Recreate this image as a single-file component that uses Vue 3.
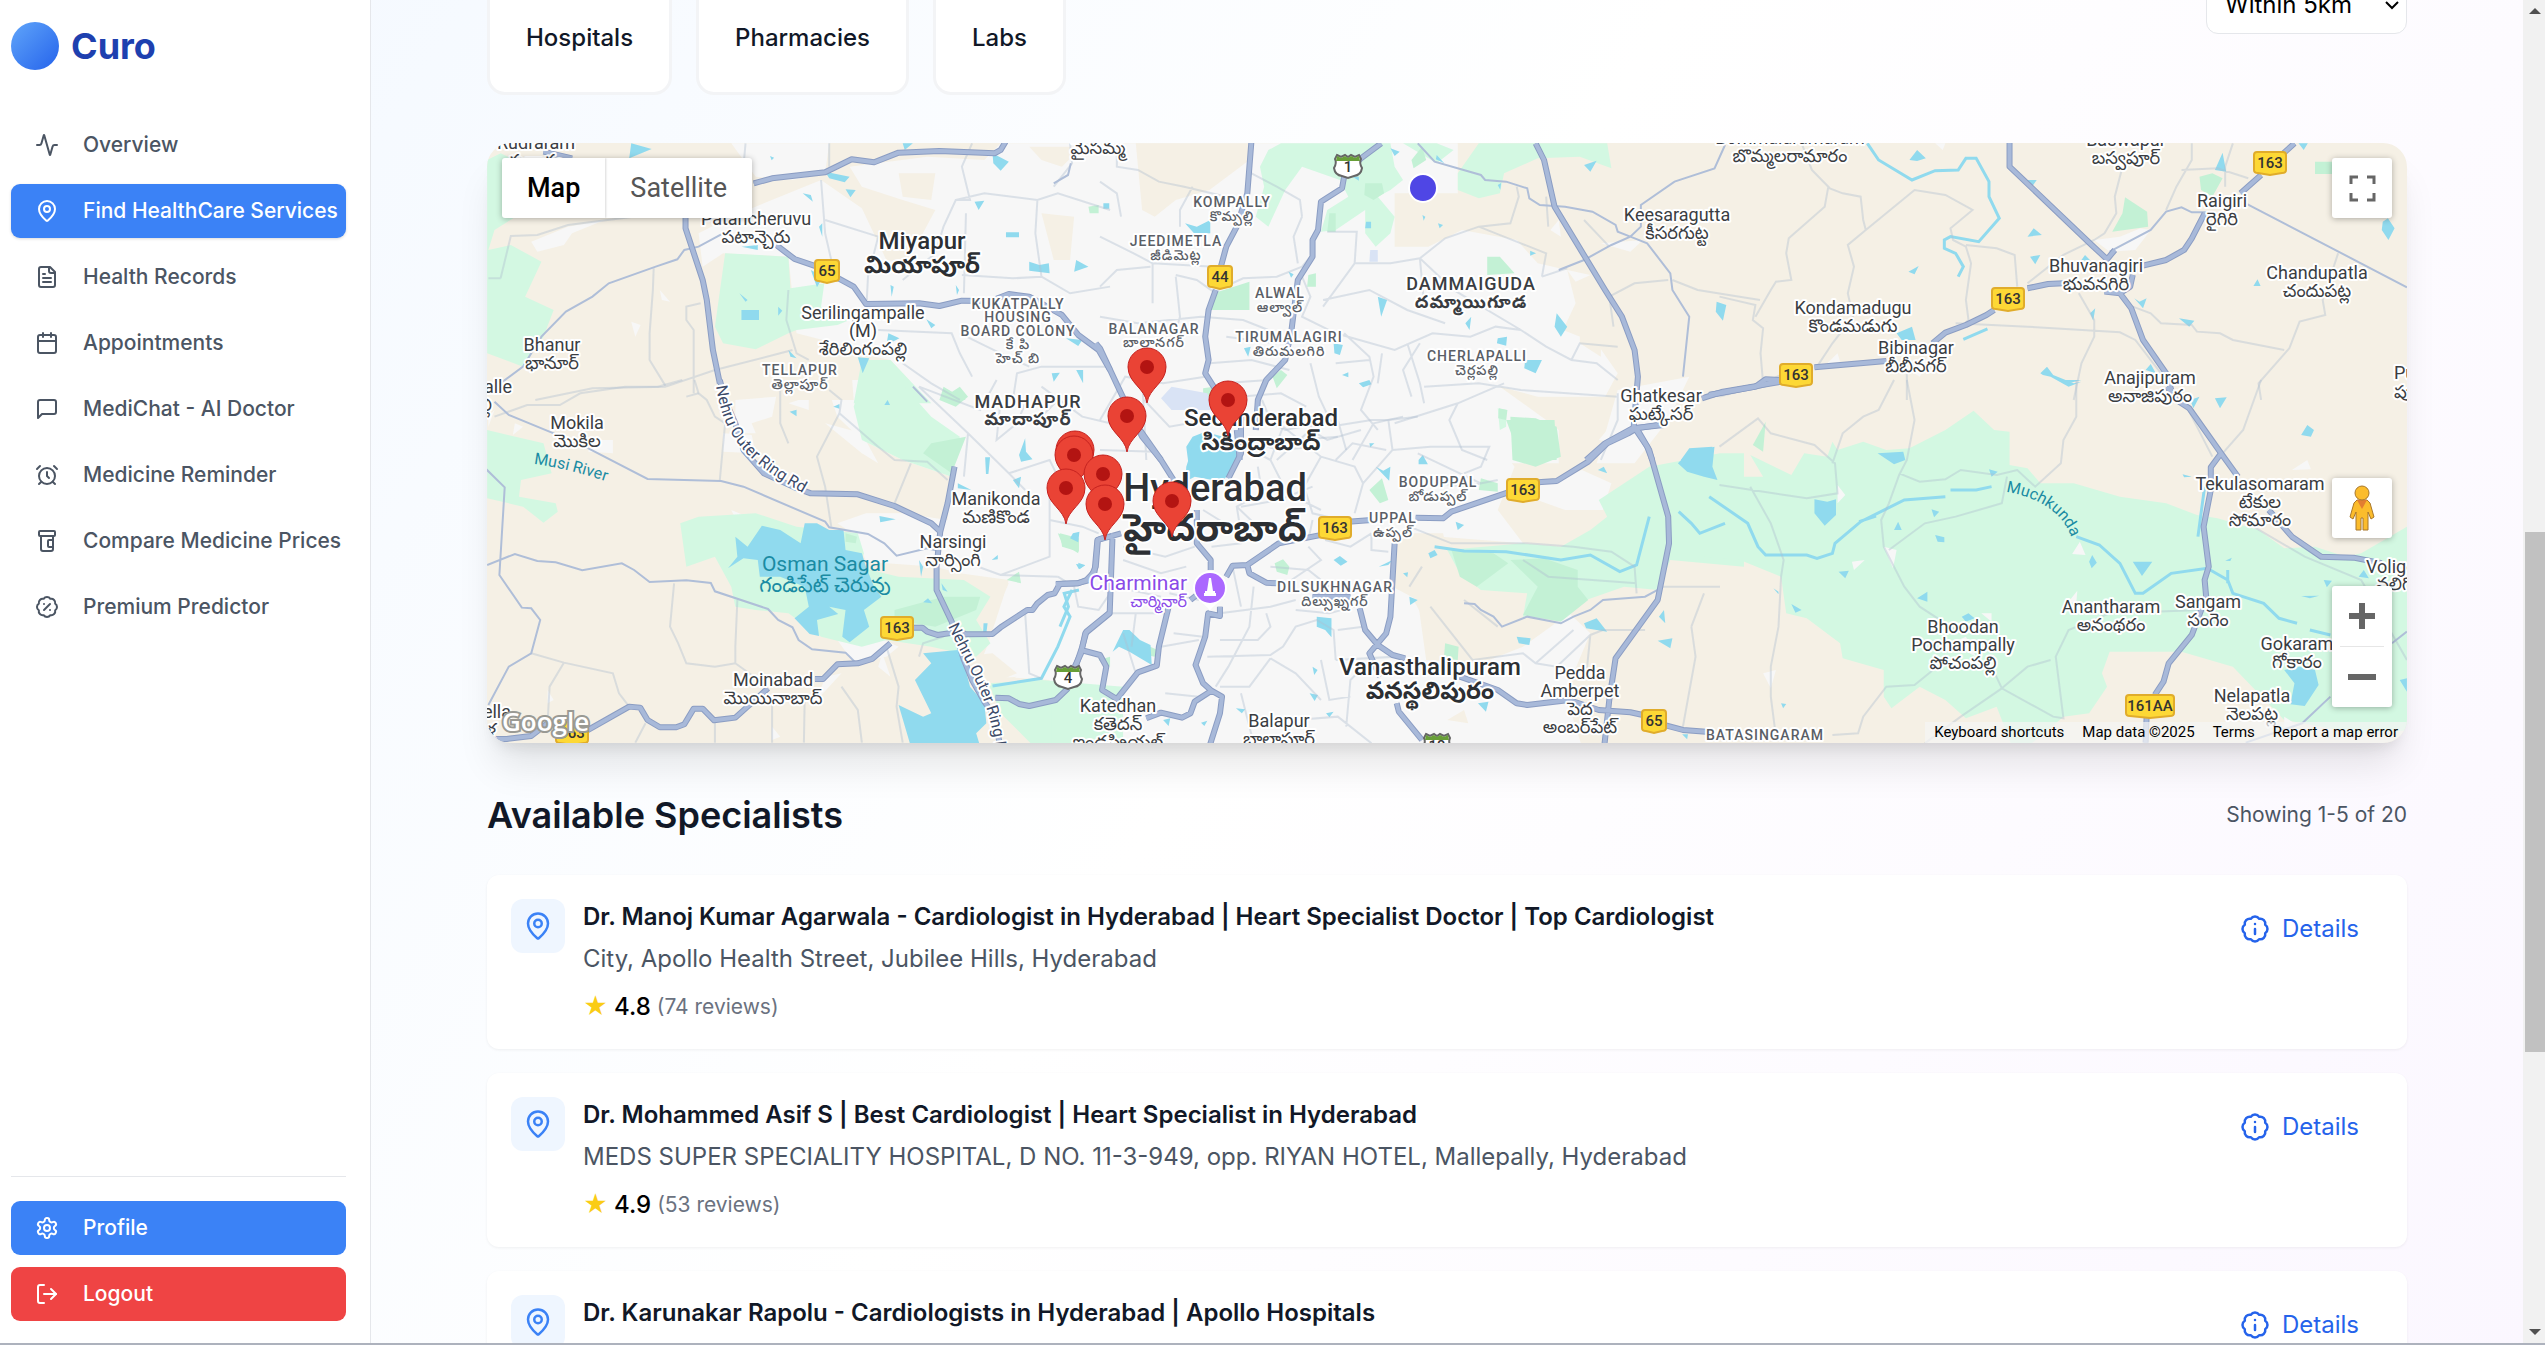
<script setup>
import { ref } from 'vue'

const icons = {
  activity: ['M22 12h-2.48a2 2 0 0 0-1.93 1.46l-2.35 8.36a.25.25 0 0 1-.48 0L9.24 2.18a.25.25 0 0 0-.48 0l-2.35 8.36A2 2 0 0 1 4.49 12H2'],
  pin: ['M20 10c0 4.993-5.539 10.193-7.399 11.799a1 1 0 0 1-1.202 0C9.539 20.193 4 14.993 4 10a8 8 0 0 1 16 0', 'M15 10a3 3 0 1 1-6 0a3 3 0 0 1 6 0'],
  file: ['M15 2H6a2 2 0 0 0-2 2v16a2 2 0 0 0 2 2h12a2 2 0 0 0 2-2V7Z', 'M14 2v4a2 2 0 0 0 2 2h4', 'M10 9H8', 'M16 13H8', 'M16 17H8'],
  calendar: ['M8 2v4', 'M16 2v4', 'M5 4h14a2 2 0 0 1 2 2v14a2 2 0 0 1-2 2H5a2 2 0 0 1-2-2V6a2 2 0 0 1 2-2', 'M3 10h18'],
  message: ['M21 15a2 2 0 0 1-2 2H7l-4 4V5a2 2 0 0 1 2-2h14a2 2 0 0 1 2 2z'],
  alarm: ['M20 13a8 8 0 1 1-16 0a8 8 0 0 1 16 0', 'M12 9v4l2 2', 'M5 3 2 6', 'm22 6-3-3', 'M6.38 18.7 4 21', 'M17.64 18.67 20 21'],
  bottle: ['M18 11h-4a1 1 0 0 0-1 1v5a1 1 0 0 0 1 1h4', 'M6 7v13a2 2 0 0 0 2 2h8a2 2 0 0 0 2-2V7', 'M5 2h14a1 1 0 0 1 1 1v3a1 1 0 0 1-1 1H5a1 1 0 0 1-1-1V3a1 1 0 0 1 1-1'],
  percent: ['M3.85 8.62a4 4 0 0 1 4.78-4.77 4 4 0 0 1 6.74 0 4 4 0 0 1 4.78 4.78 4 4 0 0 1 0 6.74 4 4 0 0 1-4.77 4.78 4 4 0 0 1-6.75 0 4 4 0 0 1-4.78-4.77 4 4 0 0 1 0-6.76Z', 'm15 9-6 6', 'M9 9h.01', 'M15 15h.01'],
  info: ['M3.85 8.62a4 4 0 0 1 4.78-4.77 4 4 0 0 1 6.74 0 4 4 0 0 1 4.78 4.78 4 4 0 0 1 0 6.74 4 4 0 0 1-4.77 4.78 4 4 0 0 1-6.75 0 4 4 0 0 1-4.78-4.77 4 4 0 0 1 0-6.76Z', 'M12 16v-4', 'M12 8h.01'],
  settings: ['M12.22 2h-.44a2 2 0 0 0-2 2v.18a2 2 0 0 1-1 1.73l-.43.25a2 2 0 0 1-2 0l-.15-.08a2 2 0 0 0-2.73.73l-.22.38a2 2 0 0 0 .73 2.73l.15.1a2 2 0 0 1 1 1.72v.51a2 2 0 0 1-1 1.74l-.15.09a2 2 0 0 0-.73 2.73l.22.38a2 2 0 0 0 2.73.73l.15-.08a2 2 0 0 1 2 0l.43.25a2 2 0 0 1 1 1.73V20a2 2 0 0 0 2 2h.44a2 2 0 0 0 2-2v-.18a2 2 0 0 1 1-1.73l.43-.25a2 2 0 0 1 2 0l.15.08a2 2 0 0 0 2.73-.73l.22-.39a2 2 0 0 0-.73-2.73l-.15-.08a2 2 0 0 1-1-1.74v-.5a2 2 0 0 1 1-1.74l.15-.09a2 2 0 0 0 .73-2.73l-.22-.38a2 2 0 0 0-2.73-.73l-.15.08a2 2 0 0 1-2 0l-.43-.25a2 2 0 0 1-1-1.73V4a2 2 0 0 0-2-2z', 'M15 12a3 3 0 1 1-6 0a3 3 0 0 1 6 0'],
  logout: ['M9 21H5a2 2 0 0 1-2-2V5a2 2 0 0 1 2-2h4', 'm16 17 5-5-5-5', 'M21 12H9'],
}

const nav = [
  { label: 'Overview', icon: 'activity' },
  { label: 'Find HealthCare Services', icon: 'pin', active: true },
  { label: 'Health Records', icon: 'file' },
  { label: 'Appointments', icon: 'calendar' },
  { label: 'MediChat - AI Doctor', icon: 'message' },
  { label: 'Medicine Reminder', icon: 'alarm' },
  { label: 'Compare Medicine Prices', icon: 'bottle' },
  { label: 'Premium Predictor', icon: 'percent' },
]

const categories = ['Hospitals', 'Pharmacies', 'Labs']
const radius = ref('5')

const specialists = [
  { name: 'Dr. Manoj Kumar Agarwala - Cardiologist in Hyderabad | Heart Specialist Doctor | Top Cardiologist', address: 'City, Apollo Health Street, Jubilee Hills, Hyderabad', rating: '4.8', reviews: 74 },
  { name: 'Dr. Mohammed Asif S | Best Cardiologist | Heart Specialist in Hyderabad', address: 'MEDS SUPER SPECIALITY HOSPITAL, D NO. 11-3-949, opp. RIYAN HOTEL, Mallepally, Hyderabad', rating: '4.9', reviews: 53 },
  { name: 'Dr. Karunakar Rapolu - Cardiologists in Hyderabad | Apollo Hospitals', address: 'Apollo Hospitals, Jubilee Hills, Hyderabad', rating: '4.9', reviews: 41 },
]

// Every tile keeps its shapes in its own coordinate space; `at` places it on the map.
const tiles = [
  {
    at: 'translate(470 0) scale(.4082 .3333)',
    urban: 'M640,430H880L870,520 790,540 700,530z M860,540L960,625 1020,780 1070,790 1140,630 1060,600 960,560 930,500 1120,470 1260,480 1300,430H1600V1210H1130L1030,1080 950,1060 870,1050 800,1000 780,770 620,760 570,800 560,700 640,650z M150,725L240,680 330,660 250,700 230,735 165,755z M465,870L490,905 470,900z M395,965L418,975 405,1010z M45,880L90,865 60,905z',
    beige: 'M1050,520L1140,520 1130,600 1060,590z M1400,640L1480,650 1470,780 1430,780z M1370,440H1500L1450,500 1400,480z M800,1000L930,1040 940,1200H780z',
    park: 'M42,480L75,460 110,480 125,640 60,690 45,750 100,735 175,785 135,890 205,930 180,1010 130,1100 42,1060z M625,760L780,770 785,865 868,850 860,920 930,960 900,975 800,990 780,1000 700,1048 620,1030 600,980z M960,1080L1030,1080 1130,1210H940z',
    wood: 'M1515,620L1540,615 1540,640 1518,640z M1160,1160L1215,1200H1150z',
    water: 'M395,430L445,447 390,475z M870,515L930,530 918,547 880,535z M1060,430H1085L1065,450z M1280,460L1320,485 1300,512 1282,490z M1370,785L1395,795 1418,790 1420,820 1370,812z M665,930L708,930 708,960 665,960z M1485,780L1515,800 1480,815z M950,1072L978,1075 962,1120z M1025,1000L1052,1015 1020,1035z M1313,697h32v15h-32z M1236,605L1260,602 1246,630z M1425,1120L1445,1118 1430,1145z M1485,1110h17v40z M920,568L945,570 932,592z M815,580L835,585 840,605z M855,680l8,-10v40z M835,810L865,830 850,862z M665,740L705,735 705,750z M1030,855l8,5 -5,30z M1190,855l8,15 -5,15z M1118,958L1140,975 1130,985z M780,1050L800,1075 785,1070z M735,468l10,5 -6,8z M660,880L680,900 675,905z M755,920l10,12 -10,15z M1460,1015L1500,1020 1490,1038z',
    minor: 'M75,835L100,708 165,705 240,675 400,650 M45,835L75,835 M450,805L448,870 440,1000 440,1080 480,1160 M565,910L530,920 530,960 548,990 548,1180 M480,1160L600,1110 760,1060 790,1050 M160,1200L300,1165 480,1160 M675,430L670,500 M880,430V500 M860,540L870,700 885,780 M870,660L1000,710 975,830 972,900 M1230,430L1205,500 1225,600 1190,600 1160,680 1140,760 1060,840 M1190,600L1260,580 1390,600 1440,580 1568,630 M1390,600L1385,700 1400,830 1470,880 1568,860 M1215,640L1210,880 M1205,825L1330,835 1400,830 M1470,430L1475,490 1430,560 M780,870L775,960 800,1060 830,1080 M1000,990L1180,1000 1200,1060 1230,1130 M1370,1100L1300,1060 1200,1000 M1330,1200L1340,1120 1400,1100 1568,1100 M1060,1090L1130,1150 1200,1200 M530,1190L560,1180',
    mid: 'M30,1190L130,1100 175,1010 235,935 300,890 340,850 455,800 508,778 525,750 560,740 620,700 M1430,550L1465,525 1472,490',
    major: 'M180,455L250,475 M695,550L740,535 870,517 935,478 990,487 1050,458 1150,453 1285,460 1300,450 1312,425 M528,640V685L570,840 580,900 595,1050 612,1150 M750,735L795,777 850,800 940,860 970,912 1100,910 1150,918 1205,902 1275,903 1320,882 1370,890 1450,945 1490,1005 1540,1050 1568,1110',
  },
  {
    at: 'translate(1100 130) scale(.4209 .3333)',
    urban: 'M-20,40H850V190L700,190 700,350 780,350 860,300 990,330 1040,400 1110,420 1130,520 1100,600 1180,640 1230,730 1200,800 1040,800 950,770 1060,870 1090,900V1000H-20z M1230,780L1400,740 1350,870 1270,1000H1180z M1110,420L1165,435 1130,455z M1190,340L1290,330 1260,365z M1070,300L1090,270 1095,320z',
    beige: 'M85,40H360L355,90 260,180 180,210 130,260 100,240z M1140,600L1190,600 1190,680 1140,640z',
    park: 'M400,60L430,40H690L700,110 720,150 690,180 660,200 700,260 690,310 655,350 630,310 630,240 560,300 525,305 540,240 590,200 570,150 480,110 440,180 400,290 370,260 390,170 380,110z M720,40H800L840,60 800,100z M850,130L900,40H1205L1215,115 1140,80 1040,85 960,130 950,190 900,205 850,180z',
    wood: 'M740,90L765,50 775,90 745,115z M630,160L670,160 675,190 650,210 628,195z M920,380H950L985,430 920,435z M270,490L355,455 355,540H262z M965,870L1080,870 1085,990H1000z M410,740L430,720 445,735 420,775z M545,250h15v55h-20z M495,435L513,430 513,470 492,470z M245,775L270,770 270,800 245,805z M948,835L968,840 965,870 946,865z',
    water: 'M202,280L230,290 262,270 262,310 225,312z M205,950L220,920 250,905 320,930 330,1000H210z M660,500L682,510 668,560z M1010,690L1050,690 1035,730 1008,715z M1085,550L1110,590 1095,620 1080,590z M1465,515L1488,525 1480,572 1463,545z M945,625L967,620 965,647 943,640z M555,640L577,645 570,675 557,670z M615,760L640,750 645,763 625,772z M1150,105L1180,92 1165,125z M690,55L712,65 700,78z M868,580L882,560 878,600z M1022,362L1036,370 1022,377z M632,275h12v20h-14z M766,255l7,5 -4,12z M803,280l12,5 -8,10z M342,655L358,650 352,680z M8,220h14v16h-14z M800,75L818,100 798,88z M945,165l8,-6 -2,20z M575,735l15,-8v15z M448,425l12,8 -6,10z M1380,990L1400,955 1455,950 1450,990z M600,140h15v12z',
    industry: 'M145,805L170,770 255,790 270,840H170z M642,360h18v35h-20z',
    minor: 'M0,155L40,190 50,260 M40,40V110L90,120 140,155 200,170 300,200 M220,170L190,240 190,290 M360,130L420,170 475,210 480,260 M0,320L80,370 125,400 125,520 M125,400L270,410 M0,470L40,420 120,410 M180,435L230,450 275,490 M280,480L340,445 420,440 480,410 500,380 M540,305L610,305 605,400 530,530 M480,260L460,320 470,400 M605,400L690,400 760,385 820,325 900,290L975,280 995,200 990,170 M760,385L840,480 1000,600 1060,650 1120,690 1180,700 1230,750 M760,385L770,520 M480,440L500,500 480,560 560,610 700,660 790,610 880,620 940,590 1000,600 M900,290L1000,340 1060,370 1050,440 M1050,440L1110,415 M530,510L640,480 730,540 820,580 M240,560L340,570 400,600 M260,700L360,690 450,720 M290,760L400,750 M0,870L60,740 150,760 250,740 M580,610L640,680 650,740 620,840 660,900 M730,640L760,760 770,820 M770,770L900,760 1000,780 1230,800 M850,820L830,870 860,960 920,990 M1220,590L1210,500 1270,460 1350,450 M1360,450L1420,480 1568,510 M1150,270L1210,350 M700,880L850,820 960,760 M600,990L650,880 720,860 M1060,200L1065,290 M1190,990L1230,870 1230,790 M100,740L110,990 M0,960L130,965 M380,860L440,900 560,870 M420,990L500,900 540,930 620,900 M500,700L520,800 550,880 M670,670L660,760 M760,640L720,720 740,800 M1120,690L1140,640 1230,650 M560,990L600,940 680,960 M330,800L430,790 490,830 M180,440L190,560 170,650 M0,560L90,580 240,560 M300,620L420,640 M560,700L640,690 M360,930L420,960 520,950',
    mid: 'M755,40L795,95 905,135 915,150 965,155 1015,175 1020,205 1045,225 1105,230 1170,245 1225,285 1230,305 1260,320 1300,340 1355,430 1360,480 1400,560 1385,740 M1090,420L1150,390 1215,345 1260,320 1285,290V225L1365,155 1460,115 1485,45',
    major: 'M360,30L355,110 350,190 325,290 300,350 285,420 M275,480L258,540 250,620 258,690 250,730 275,780 300,860 M668,40L620,85 580,140 575,175 525,215 518,300 505,330 505,380 470,450 455,600 440,690 395,750 375,810 370,900 M1035,40L1055,90 1080,230 1200,480 1240,560 1270,660 1278,740 1268,890 1300,950 1312,990 M1155,990L1200,940 1265,895 1340,885 M1430,805L1480,785 1620,755 M325,900L332,990 M-10,640L0,655 50,790 100,920 145,990',
  },
  {
    at: 'translate(1740 0) scale(.5134 .3333)',
    urban: 'M690,720L740,710 780,685 800,690 770,750 720,755z M380,430H400L395,450z M170,1090L190,1060 195,1085z M330,1110L380,1060 350,1130z',
    wood: 'M750,592L793,635 795,680 725,695 745,640z M895,530L920,520 940,535 920,590 898,570z M1120,485h40v37h-40z',
    water: 'M940,458L947,515 925,510z M1088,430h18l-8,20z M1252,665L1262,655 1275,685 1263,720 1250,690z M330,480L345,450 362,475 345,483z M560,540h18l-10,22z M560,710L572,685 588,705z M565,770L585,765 575,793z M328,815L348,798 340,823z M305,1000L335,980 342,1020 315,1020z M1000,858L1008,838 1014,858z M768,895L778,905 792,895 785,925z M682,940L692,925 688,962z M855,955L885,962 875,980z M665,780L672,765 685,785z M790,1110L800,1092 810,1120z M585,1120L598,1100 610,1125 650,1150 665,1145 640,1160 605,1130 590,1125z',
    river: 'M248,430L270,480 335,540 380,512 425,510 440,475 460,475 485,545V590L505,655 465,725 410,710 398,720V745L420,760 435,800 425,830 M435,1018L482,987',
    minor: 'M-40,890L30,915 25,960 45,985 40,1060 45,1150 M120,430L140,510 175,565 200,580 235,590 240,660 245,690 340,570 400,585 453,630 410,685 415,720 440,740 450,790 440,900 445,960 425,990 M172,560L165,620 95,715 90,760 100,840 70,845 60,870 30,950 M245,690L210,735 222,800 210,880 220,950 180,1030 150,1100 M440,735L500,745 535,765 540,860 M745,500L730,590 733,640 710,700 690,720 630,765 560,850 M880,430V480L850,560 830,630 M960,430L945,500V560 M860,510L930,505 990,535 M1165,760L1135,900 1140,945 1090,965 1070,1045 1010,1150 1015,1200 M765,920L800,940 820,970 880,975 890,995 935,1000 960,1020 1060,1050 M660,880L690,960V1010L665,1090 650,1200 M420,970L560,980 740,997 770,1020 820,1120 M325,1120V1200 M45,1150L100,1110 M-40,1190L60,1150',
    mid: 'M985,610L1299,862 M720,755L800,690 830,635 860,622 880,637H910',
    major: 'M525,425V500L685,735 715,778 730,750 M1080,430L1055,465 M1015,525L975,580 M905,640L880,715 865,750 830,780 785,797 M765,825L760,860 740,880 710,875 M630,850L600,852 560,865 M495,930L480,945 440,975 400,998 375,1030 M285,1083L145,1102 M80,1140L50,1138 30,1160 -60,1185 M740,880L762,925 785,1020 830,1120 840,1170',
  },
  {
    at: 'translate(470 380) scale(.4082 .3333)',
    urban: 'M870,0H1600V1110H1430L1420,900 1290,890 1250,850 1270,790 1320,600 1200,580 1140,560 970,545 950,470 900,430 970,400 1060,400 1170,420 1180,290 1060,240 960,180 900,110z M45,110L60,90 45,140z M130,140L110,130 105,165z M295,180L350,180 350,220 290,215z M650,60L750,50 740,110 690,130 700,160 650,160z M620,160L690,165 700,220 620,215z M780,70L830,50 830,90z M870,130L960,160 1000,250 960,220z M640,390L680,410 660,440z M900,780L980,760 1050,800 1020,830 940,850z M870,890L910,880 850,960z M1010,820L1030,890 1000,860z M1040,840L1060,870z M740,1040L760,1070 740,1080z M190,930L205,960 190,970z M1070,60L1000,50 1100,20z',
    beige: 'M1200,830L1280,820 1340,880 1260,920z M1290,690L1280,640 1220,590 1320,610z M1260,900L1340,890 1290,920z',
    park: 'M42,150L180,190 200,280 125,300 120,350 210,370 215,395 180,428 130,380 42,355z M960,0H1050L1130,110 1200,170 1180,290 1060,240 960,180 940,80z M515,430L560,410 700,400 800,440 950,460 965,520 950,560 1050,590 1210,600 1275,650 1240,720 1275,790 1240,830 1130,800 1020,780 960,800 860,770 780,700 700,690 650,680 640,620 600,530 530,560z M1270,910L1400,900 1600,920V1110H1390L1300,1000z',
    wood: 'M1040,690L1160,650 1250,650 1240,690 1140,740 1040,720z M1130,190L1215,170 1180,280 1110,220z M1150,60L1200,20 1220,50 1190,80z M1315,600L1345,575 1350,610z M1440,460L1490,480 1490,520 1450,490z M920,460L948,470 945,490 920,485z M1540,840L1568,830V860z',
    water: 'M650,470L680,500 715,437 760,450 810,490 820,430 850,430 880,450 915,450 920,510 960,520 970,560 990,620 1008,650 965,690 978,740 930,787 912,770 920,690 880,680 902,702 850,720 855,768 832,762 795,715 830,680 820,620 760,590H710L705,540 670,535 632,565 655,530z M1110,820L1195,810 1210,850 1225,920 1260,970 1265,1030 1240,1060 1250,1100H1080L1050,975 1110,1010 1130,1000 1090,900 1130,850z M1195,310L1228,330 1195,325z M1262,232h12l-4,50h-6z M1345,225L1360,175 1362,215 1378,238 1350,245z M1330,300L1350,290 1345,325z M1003,408L1043,418 1005,427z M1477,460L1493,455 1490,487 1470,475z M1110,667L1122,655 1132,670z M1258,730h10l-3,30h-8z M1490,548l17,8 -14,12z M1278,540L1293,525V538z M1155,610L1170,635 1158,630z M783,95l17,-6v20z M1015,75l8,-15 6,15z M890,80l15,-8v14z M1100,540l10,20 -5,30z',
    river: 'M1475,630L1455,680 1470,710 1440,800 1400,895 1280,918',
    minor: 'M760,0V130L780,190 M550,0L560,40 580,60 600,110 625,130 612,300 M905,100L910,60 880,30 M60,110L140,75 220,75 270,40 380,20 460,20 520,0 M905,100L850,230 870,320 885,440 M905,100L1000,200 1040,240 1120,245 1170,300 M500,610L490,740 510,790 530,850 600,860 650,850 690,885 M655,660L650,800 650,850 M150,820L230,848 350,880 365,940 390,980 M230,848L195,920 190,1030 M1200,540L1300,585 1440,590 M1040,370L1080,250 M1290,0L1250,90 1100,20 1220,160 1320,280 1360,330 M1220,160L1210,290 M1320,280L1420,240 1440,290 1420,340 1420,530 1300,585 M1020,800L1050,920 1045,980 1060,1088 M1100,830L1110,790 1160,770 M910,920L950,990 960,1088 M1360,700L1370,880 1400,895 M820,950L818,1088 M740,950L740,1088 M600,1020V1088 M430,1030L405,1088 M1400,20L1500,110 1568,130 M1340,130L1400,110 1440,60 M1300,60L1290,180 1340,130 1370,40 M1420,420L1500,440 1540,460 M1440,590L1480,620 1490,680 1540,690 1568,640',
    mid: 'M60,65L95,105 205,160 290,205 435,297 615,303 670,320 870,425 880,442 975,462 1015,490 1045,527 1120,505 1143,512 M40,268L85,322 72,585 127,683 150,685 172,720 150,820 95,860 45,975 M42,555L110,522 165,543 210,547 275,571 372,550 402,570 440,606 530,601 590,609 600,634 730,687 755,720 790,742 805,780 838,808 920,818 948,852 M1085,20L1120,65',
    major: 'M612,0L625,60 650,130 670,210 720,280 795,322 835,340 950,343 1040,378 1130,430 1152,455 1143,560V630L1180,725 1210,840 1230,900 1260,965 1280,1000 1300,1100 M1187,260L1170,370 1152,455 M60,1077H90L150,1068 190,1030 M285,1053L390,980 417,983 435,1020 465,1042H505L525,1033 548,986H570L598,1021 650,1013 680,980 730,925 M845,897H865L900,853 950,850 985,837 1030,790 M1085,743H1108L1120,755 1145,765 1200,755 1215,763 1280,762 1300,742 1365,690H1378L1390,670 1415,645 1432,640 1445,612 1490,610 1510,600 1530,575 1537,480 1560,470 M1287,953L1320,955 1345,972 1370,978 1435,960 1465,925 M1485,855L1500,800 1510,755 1565,700',
  },
  {
    at: 'translate(1060 400) scale(.4209 .3333)',
    urban: 'M-20,-10H1060L1020,100 1080,200 1040,330 1100,430 800,400 790,560 850,600 870,780 1000,790 1100,740 1210,640 1260,700 1200,880 1240,1040H-20z M1360,0L1460,-10 1400,90 1330,130 1280,120z M1090,280L1240,210 1310,250 1290,330 1200,330z',
    beige: 'M840,600L980,580 1050,680 990,790 900,740z M1110,390L1190,430 1120,425z M920,960L960,930 970,970z M810,400L910,400 920,450 880,480 800,470z',
    park: 'M1400,200L1568,160H1625V500L1450,480 1420,570 1340,560 1250,600 1190,660 1100,650 1110,580 1000,570 950,520 920,450 1100,430 1190,440 1260,390 1300,350 1280,300z M1040,25L1060,30V80L1045,90z M-20,860L0,860 60,960 45,1040H-20z',
    wood: 'M1070,50L1130,55 1180,80 1190,170 1130,200 1075,180z M930,450L1030,460 1065,490 990,560 950,530z M1070,480L1150,475 1230,510V560L1255,600 1190,665 1100,645 1135,560z M735,270L765,235 780,300 760,310z M510,490L530,478 545,500 540,525 515,515z M1000,235L1040,250V275L995,270z M0,400L45,415V455L5,440z M915,730L947,740 945,780 912,775z M205,735L232,750 225,770 205,765z',
    water: 'M300,200L320,120 345,110 360,135 415,185 405,215 385,245 320,230 298,245z M125,755L150,690 165,690 190,720 215,735 218,795 165,755 140,740z M610,650L645,655V712L630,690 610,680z M750,200L768,212 785,200 782,242z M650,480L665,468 683,485 667,497z M1085,710L1118,715 1115,735 1090,730z M1420,722L1455,715 1450,745z M1245,670L1275,655 1300,695 1250,685z M1468,190L1500,150 1520,150 1555,140 1550,200 1562,240 1530,230 1490,215z M875,460L890,450 897,465 880,475z M940,365L960,375 945,390z M830,590L850,600 832,615z M1278,210L1292,200 1300,220z M852,180l10,-15 12,28h-22z M993,910L1018,905 1012,935z M1423,650L1435,630 1438,670z M593,880L613,885 605,903z M245,960L262,955 258,978z M632,940L650,935 640,952z M418,925L440,928 432,940z M335,968L350,962 343,978z M38,492L60,495 45,508z M757,500L790,480 780,495z M1478,1003h14l-2,15z M600,800l12,10 -8,15z M735,130l12,0 -10,12z M815,520l12,-3 -2,15z',
    river: 'M890,440L960,453 1060,455 1190,480 1260,465 1330,515 1370,495 1400,350 M1470,335L1500,370 1520,400 1580,370 M0,680L20,620 10,580 45,570',
    minor: 'M420,0L440,60 530,80 620,170 700,200 720,250 M620,170L580,260 600,340 650,355 M530,80L500,180 540,280 620,330 M470,200L480,280 420,320 430,400 M720,250L700,340 M720,250L790,150 780,60 850,50 M790,150L880,140 1020,140 1000,200 960,220 M850,160L1000,250 M430,400L340,330 M430,320L520,300 600,260 M600,360L590,420 M360,440L430,430 470,380 420,320 M630,420L690,440 740,400 M830,380L930,430 1110,430 1220,440 1310,455 1365,500 1370,580 M600,540L640,590 M590,440L620,480 550,540 M380,640L500,620 560,600 M260,580L330,600 M130,560L240,590 M120,640L250,640 M240,740L330,720 M380,720L470,720 500,680 490,640 M350,770L500,765 530,740 560,680 610,660 650,690 655,780 M500,775L450,860 380,860 M500,775L560,820 620,900 M655,780L800,770 830,800 M620,780L640,900 690,890 M560,630L640,640 700,620 M720,680L660,690 M730,790L690,840 680,980 M560,960L660,950 740,1030 M430,880L460,1030 M880,620L980,780 1100,760 1130,790 1180,800 1260,705 1290,690 1390,690 M1260,705L1250,830 M1130,790L1220,690 M1500,680L1510,770 1480,980 M1420,560L1568,560 M1530,580L1500,680 M1100,480L1160,530 1370,550 M960,600L1040,680 M150,440L250,470 320,440 M150,480L240,520 300,500 M180,820L150,700 M270,700L340,710 M250,880L330,890 M460,560L450,680 400,800 370,860 M410,500L430,620 M740,400L740,450 780,455 M200,0L260,80 350,60 M480,0L500,60 600,80 M640,80L740,60 780,60 M500,500L590,510 640,560 M860,500L830,560 M660,60L680,150 M560,120L660,110 M440,140L500,180 M850,240L960,260 1040,240 M180,640L170,740',
    mid: 'M960,610L985,612 1000,630 1030,650 1050,680 1110,650 1190,670 1220,650 1260,630 1290,600 1390,590 1420,570',
    major: 'M-10,552L40,550 70,540 85,500 90,420 145,400 M125,400L118,640 60,700 50,760 35,800 M50,750L95,765 110,800 100,870 135,897 185,817 230,797 235,740 262,600 M205,955L240,938 290,953 310,940 320,905 360,872 385,890 380,940 355,1040 M360,872L340,850 322,795 345,710 352,640 380,648V620 M325,330L325,430 358,480V510 M395,530L410,497 445,495 520,430 600,410 640,400 M445,495L450,520 490,548 515,550 M685,365L740,360 M845,353L910,355 930,335 1070,275 M1135,247L1180,243 1255,185 1300,130 1350,100 1370,85 1420,75 M1370,85L1400,150 1445,350 1447,430 1420,600 1320,775 1305,900 1293,1040 M795,430L785,650 775,700 735,760 760,830 M712,625L725,690 755,735 790,765 820,775 M800,910L805,935 860,1020 M950,830L1040,870 1085,910 1110,915 1210,900 1280,930 1355,937 1385,945 M1435,975L1480,990 1535,995 M190,90L240,180 270,240 M430,50L430,160 400,235 M600,590L690,590 M310,600L340,570',
  },
  {
    at: 'translate(1740 380) scale(.5134 .3333)',
    urban: 'M1075,270L1105,240 1112,268z M45,880L70,870 60,925z',
    park: 'M20,225L100,285 125,220 170,230 180,185 190,210 240,185 285,210 330,205 400,150 455,92 495,150 525,155V255L560,265 585,310 650,310 740,350 830,370 890,405 930,415 1010,450 1060,505 1120,500 1180,530 1210,520 1299,440H1320V1050L1200,1060 1060,1020 960,860 860,815H720L705,880 715,920 680,1000 630,1010 600,1050 560,1100H530L500,980 440,1015 400,960 350,920 295,985 280,950V870L200,835 195,790 130,715 90,700 80,590 0,540 -70,530V290L45,290z',
    wood: 'M25,195L50,125 45,215z',
    patch: 'M190,315L205,345 190,370z M280,500L305,510 298,565z M218,545L243,540 222,570z M647,522L662,485 673,525z M470,700h20v25z M640,665L657,632 655,670z M410,790L440,770 460,830z M1060,1010L1090,1040 1060,1040z',
    water: 'M145,358L170,365 187,358V405L165,437 145,400z M268,220L318,215 322,240 300,253z M765,545H803L783,588z M1060,870L1090,860 1120,870 1127,915 1100,978 1072,973 1080,910z M485,268L502,275 490,290z M373,388L388,395 378,412z M300,450L308,425 315,450z M380,465L398,472V487L385,485z M192,575L212,572 205,595z M345,655L365,635V665z M100,672L120,690 108,698z M432,710L445,700 457,715 440,725z M1093,165L1105,135 1118,150 1112,170z M925,55L948,52 935,85z M877,60L895,50 883,85z M862,283L880,290 865,292z M1137,600L1153,602 1143,622z M1205,590L1215,570 1225,595z M680,545L686,525 695,548 685,565z M945,542L958,533 955,543z M1093,648L1128,647 1110,655z M1285,900L1299,895V935z M80,970L90,972 84,985z M65,625l10,10v8z M625,0L640,10 665,0z',
    river: 'M-60,350L15,430 35,500 50,525H130L150,535 180,520 185,490 235,425 320,360 400,350 M232,425L265,408 M410,330H460L490,320 M655,470L700,495 740,550 770,640 785,640 840,580 910,565 950,600 960,640 1020,670 1050,715 1085,730 M905,320L892,470 M1110,750L1150,765 M950,570V610',
    minor: 'M325,0L340,120 325,240 310,285 290,370 275,420 280,500 320,620 350,680 430,760 M310,280L350,305 400,298 430,270 500,285 540,270 575,320 625,250 630,180 655,110V0 M-40,200L35,115 60,160 145,195 185,250 190,340 130,355 -40,315 M300,0L270,90 240,110 200,160 180,250 M520,290L510,370 420,410 360,430 290,510 M20,320L60,430 85,540 80,590 75,740 60,860V950L70,1070 M180,1065L230,1060 240,1010 285,920 340,915 400,840 M490,860L510,925 610,1010 630,1015 615,830 640,750 720,700 900,690 M510,925L430,1010 360,1090 M510,925L560,860 605,840 M870,80L920,230 M1015,0L980,150 940,220 M1000,440L1100,530 1210,600 1299,840',
    mid: 'M985,1088L1095,1030 1150,950 M1270,790L1299,755',
    major: 'M832,20L850,60 875,85 937,220 970,290 M937,220L917,262V330L903,440 913,560 905,600 908,650 880,765 835,850 825,905 808,945 M792,1010L790,1088 M1030,390L1075,470 1132,530 1195,533 1250,550 M-60,45L30,20 80,0',
  },
]

// Drawn from the ground up, so that roads of one tile never hide under a neighbour's parks.
const layers = ['urban', 'beige', 'park', 'wood', 'patch', 'industry', 'water', 'river', 'minor', 'mid', 'casing', 'major']
const layerPath = (tile, layer) => tile[layer === 'casing' ? 'major' : layer]

const labels = [
  ['town', 536, 149, 'Rudraram'], ['town', 536, 167, 'రుద్రారం'],
  ['town', 756, 225, 'Patancheruvu'], ['town', 756, 243, 'పటాన్చెరు'],
  ['town', 552, 351, 'Bhanur'], ['town', 552, 369, 'భానూర్'],
  ['town', 863, 319, 'Serilingampalle'], ['town', 863, 337, '(M)'], ['town', 863, 355, 'శేరిలింగంపల్లి'],
  ['town end', 512, 393, 'alle'], ['town end', 492, 411, 'ల్లి'],
  ['town', 577, 429, 'Mokila'], ['town', 577, 447, 'మొకిల'],
  ['town', 996, 505, 'Manikonda'], ['town', 996, 523, 'మణికొండ'],
  ['town', 953, 548, 'Narsingi'], ['town', 953, 566, 'నార్సింగి'],
  ['town', 773, 686, 'Moinabad'], ['town', 773, 704, 'మొయినాబాద్'],
  ['town end', 511, 718, 'ella'], ['town end', 496, 736, 'ళ్ల'],
  ['town', 1677, 221, 'Keesaragutta'], ['town', 1677, 239, 'కీసరగుట్ట'],
  ['town', 1661, 402, 'Ghatkesar'], ['town', 1661, 420, 'ఘట్కేసర్'],
  ['town', 1853, 314, 'Kondamadugu'], ['town', 1853, 332, 'కొండమడుగు'],
  ['town', 1916, 354, 'Bibinagar'], ['town', 1916, 372, 'బీబీనగర్'],
  ['town', 2096, 272, 'Bhuvanagiri'], ['town', 2096, 290, 'భువనగిరి'],
  ['town', 2222, 207, 'Raigiri'], ['town', 2222, 225, 'రైగిరి'],
  ['town', 2126, 146, 'Baswapur'], ['town', 2126, 164, 'బస్వపూర్'],
  ['town', 1790, 144, 'Bommalaramaram'], ['town', 1790, 162, 'బొమ్మలరామారం'],
  ['town', 2317, 279, 'Chandupatla'], ['town', 2317, 297, 'చందుపట్ల'],
  ['town', 2150, 384, 'Anajipuram'], ['town', 2150, 402, 'అనాజిపురం'],
  ['town start', 2394, 379, 'Pulla'], ['town start', 2394, 398, 'పుల్ల'],
  ['town', 2260, 490, 'Tekulasomaram'], ['town', 2260, 508, 'టేకుల'], ['town', 2260, 526, 'సోమారం'],
  ['town start', 2366, 573, 'Voligonda'], ['town start', 2376, 590, 'వలిగొండ'],
  ['town', 2208, 608, 'Sangam'], ['town', 2208, 626, 'సంగెం'],
  ['town', 2111, 613, 'Anantharam'], ['town', 2111, 631, 'అనంథరం'],
  ['town', 1963, 633, 'Bhoodan'], ['town', 1963, 651, 'Pochampally'], ['town', 1963, 669, 'పోచంపల్లి'],
  ['town', 2297, 650, 'Gokaram'], ['town', 2297, 668, 'గోకారం'],
  ['town', 2252, 702, 'Nelapatla'], ['town', 2252, 720, 'నెలపట్ల'],
  ['town', 1118, 712, 'Katedhan'], ['town', 1118, 730, 'కతెదన్'], ['town', 1118, 748, 'ఇండస్ట్రియల్'],
  ['town', 1279, 727, 'Balapur'], ['town', 1279, 745, 'బాలాపూర్'],
  ['town', 1580, 679, 'Pedda'], ['town', 1580, 697, 'Amberpet'], ['town', 1580, 715, 'పెద'], ['town', 1580, 733, 'అంబర్‌పేట్'],
  ['town', 1098, 154, 'మైసమ్మ'],
  ['suburb', 800, 375, 'TELLAPUR'], ['suburb', 800, 389, 'తెల్లాపూర్'],
  ['suburb', 1018, 309, 'KUKATPALLY'], ['suburb', 1018, 322, 'HOUSING'], ['suburb', 1018, 336, 'BOARD COLONY'], ['suburb', 1018, 349, 'కే పి'], ['suburb', 1018, 363, 'హెచ్ బి'],
  ['suburb', 1232, 207, 'KOMPALLY'], ['suburb', 1232, 221, 'కొమ్పల్లి'],
  ['suburb', 1176, 246, 'JEEDIMETLA'], ['suburb', 1176, 260, 'జీడిమెట్ల'],
  ['suburb', 1280, 298, 'ALWAL'], ['suburb', 1280, 312, 'ఆల్వాల్'],
  ['suburb', 1154, 334, 'BALANAGAR'], ['suburb', 1154, 347, 'బాలానగర్'],
  ['suburb', 1289, 342, 'TIRUMALAGIRI'], ['suburb', 1289, 356, 'తిరుమలగిరి'],
  ['suburb', 1477, 361, 'CHERLAPALLI'], ['suburb', 1477, 375, 'చెర్లపల్లి'],
  ['suburb', 1438, 487, 'BODUPPAL'], ['suburb', 1438, 501, 'బోడుప్పల్'],
  ['suburb', 1393, 523, 'UPPAL'], ['suburb', 1393, 537, 'ఉప్పల్'],
  ['suburb', 1335, 592, 'DILSUKHNAGAR'], ['suburb', 1335, 606, 'దిల్సుఖ్నగర్'],
  ['suburb', 1765, 740, 'BATASINGARAM'],
  ['district', 1028, 408, 'MADHAPUR'], ['district', 1028, 425, 'మాదాపూర్'],
  ['district', 1471, 290, 'DAMMAIGUDA'], ['district', 1471, 308, 'దమ్మాయిగూడ'],
  ['city', 922, 249, 'Miyapur'], ['city', 922, 273, 'మియాపూర్'],
  ['city', 1261, 426, 'Secunderabad'], ['city', 1261, 450, 'సికింద్రాబాద్'],
  ['city', 1430, 675, 'Vanasthalipuram'], ['city', 1430, 699, 'వనస్థలిపురం'],
  ['metro', 1215, 501, 'Hyderabad'], ['metro', 1215, 541, 'హైదరాబాద్'],
  ['lake', 825, 571, 'Osman Sagar'], ['lake', 825, 592, 'గండిపేట్ చెరువు'],
  ['poi', 1187, 590, 'Charminar'], ['poi small', 1187, 607, 'చార్మినార్'],
]
const isTelugu = (text) => /[\u0C00-\u0C7F]/.test(text)

const shields = [
  [827, 271, '65', 24], [1220, 277, '44', 24], [2270, 163, '163', 32], [2008, 299, '163', 32], [1796, 375, '163', 32],
  [1523, 490, '163', 32], [1335, 528, '163', 32], [1654, 721, '65', 24], [2150, 706, '161AA', 48], [897, 628, '163', 32], [572, 733, '163', 32],
]
const stateShields = [[1348, 166, '1'], [1068, 677, '4'], [1437, 745, '19']]
const pins = [[1147, 403], [1228, 436], [1127, 452], [1075, 486], [1074, 491], [1103, 510], [1066, 524], [1172, 537], [1105, 540]]
</script>

<template>
  <div class="app">
    <aside class="sidebar">
      <div class="brand"><span class="logo"></span><span class="brand-name">Curo</span></div>
      <nav class="nav">
        <a v-for="item in nav" :key="item.label" href="#" class="nav-item" :class="{ active: item.active }">
          <svg class="icon" viewBox="0 0 24 24"><path v-for="d in icons[item.icon]" :key="d" :d="d" /></svg>
          <span>{{ item.label }}</span>
        </a>
      </nav>
      <div class="account">
        <button type="button" class="nav-item profile">
          <svg class="icon" viewBox="0 0 24 24"><path v-for="d in icons.settings" :key="d" :d="d" /></svg>
          <span>Profile</span>
        </button>
        <button type="button" class="nav-item logout">
          <svg class="icon" viewBox="0 0 24 24"><path v-for="d in icons.logout" :key="d" :d="d" /></svg>
          <span>Logout</span>
        </button>
      </div>
    </aside>

    <main class="main">
      <div class="container">
        <div class="filters">
          <div class="categories">
            <button v-for="c in categories" :key="c" type="button" class="category">{{ c }}</button>
          </div>
          <div class="radius">
            <select v-model="radius" aria-label="Search radius">
              <option value="5">Within 5km</option>
              <option value="10">Within 10km</option>
            </select>
            <svg class="chevron" viewBox="0 0 14 9" width="14" height="9"><path d="M1,1L7,7L13,1" /></svg>
          </div>
        </div>

        <section class="map" aria-label="Map of specialists">
          <svg class="canvas" viewBox="487 143 1920 600" preserveAspectRatio="xMidYMid slice">
            <defs>
              <path id="ring-north" d="M716,386 C724,440 748,462 803,493 L850,518" />
              <path id="ring-south" d="M948,626 C970,672 990,700 996,752 L1000,820" />
              <path id="muchkunda" d="M2006,492 C2034,496 2060,510 2070,534 L2080,570" />
              <path id="musi" d="M534,464 Q565,468 602,480 L640,492" />
            </defs>
            <g v-for="layer in layers" :key="layer" :class="layer">
              <template v-for="tile in tiles" :key="tile.at">
                <path v-if="layerPath(tile, layer)" :transform="tile.at" :d="layerPath(tile, layer)" />
              </template>
            </g>

            <g v-for="[x, y, code, w] in shields" :key="`${x}-${y}`" :transform="`translate(${x} ${y})`">
              <path class="shield" :d="`M${-w / 2 + 3},-11 H${w / 2 - 3} q3,0 3,3 V7 q0,3 -4,3 L0,12 L${-w / 2 + 4},10 q-4,0 -4,-3 V-8 q0,-3 3,-3z`" />
              <text class="shield-text" y="5">{{ code }}</text>
            </g>
            <g v-for="[x, y, code] in stateShields" :key="`${x}-${y}`" :transform="`translate(${x} ${y})`">
              <path class="state" d="M-11,-11 l4,2 4,-2 3,2 3,-2 4,2 4,-2 2,4 q-2,4 1,9 q-1,7 -8,8 l-6,2 -6,-2 q-7,-1 -8,-8 q3,-5 1,-9z" />
              <path class="state-top" d="M-11,-10 l4,2 4,-2 3,2 3,-2 4,2 4,-2 1,5 H-12z" />
              <text class="shield-text" y="6">{{ code }}</text>
            </g>

            <text v-for="[kind, x, y, text] in labels" :key="kind + x + y" class="label" :class="[kind, { telugu: isTelugu(text) }]" :x="x" :y="y">{{ text }}</text>
            <text class="label road-name"><textPath href="#ring-north">Nehru Outer Ring Rd</textPath></text>
            <text class="label road-name"><textPath href="#ring-south">Nehru Outer Ring Rd</textPath></text>
            <text class="label river-name"><textPath href="#muchkunda">Muchkunda</textPath></text>
            <text class="label river-name"><textPath href="#musi">Musi River</textPath></text>

            <g transform="translate(1210 588)">
              <path class="landmark-rim" d="M0,23 C-3,16 -17,12 -17,0 A17,17 0 1 1 17,0 C17,12 3,16 0,23z" />
              <circle r="15" class="landmark" />
              <path class="landmark-glyph" d="M-1,-10 H1 L3,3 H5 V5 H6 V8 H-6 V5 H-5 V3 H-3z" />
            </g>
            <circle class="me" cx="1423" cy="188" r="14" />
            <g v-for="[x, y] in pins" :key="`${x}-${y}`" :transform="`translate(${x} ${y})`">
              <path class="pin" d="M0,0 C-2,-15 -19,-20 -19,-36 A19,19 0 1 1 19,-36 C19,-20 2,-15 0,0z" />
              <circle class="pin-dot" cy="-36" r="7" />
            </g>
          </svg>

          <div class="map-types">
            <button type="button" class="selected">Map</button>
            <button type="button">Satellite</button>
          </div>
          <button type="button" class="control fullscreen" aria-label="Toggle fullscreen">
            <svg viewBox="0 0 27 27" width="27" height="27"><path d="M2,9V2H9M18,2H25V9M25,18V25H18M9,25H2V18" fill="none" stroke="#666" stroke-width="3" /></svg>
          </button>
          <div class="side-controls">
            <button type="button" class="control" aria-label="Street View">
              <svg viewBox="0 0 28 46" width="28" height="46">
                <path d="M9,15 H19 L22,18 26,32 23,34 20,27 V45 H15 V33 H13 V45 H8 V27 L5,34 2,32 6,18z" fill="#fbbc2c" stroke="#a8772a" />
                <path d="M9,15 H19 L14,24z" fill="#e27d31" />
                <circle cx="14" cy="8" r="7" fill="#fbbc2c" stroke="#a8772a" />
              </svg>
            </button>
            <div class="zoom">
              <button type="button" aria-label="Zoom in"><svg viewBox="0 0 28 28" width="28" height="28"><path d="M1,14H27M14,1V27" stroke="#666" stroke-width="6" /></svg></button>
              <hr />
              <button type="button" aria-label="Zoom out"><svg viewBox="0 0 28 28" width="28" height="28"><path d="M0,14H28" stroke="#666" stroke-width="6" /></svg></button>
            </div>
          </div>
          <span class="google">Google</span>
          <div class="legal">
            <button type="button">Keyboard shortcuts</button>
            <span>Map data ©2025</span>
            <a href="#">Terms</a>
            <a href="#">Report a map error</a>
          </div>
        </section>

        <header class="results-head">
          <h2>Available Specialists</h2>
          <p>Showing 1-5 of 20</p>
        </header>

        <ul class="results">
          <li v-for="s in specialists" :key="s.name" class="card">
            <span class="badge"><svg class="icon large" viewBox="0 0 24 24"><path v-for="d in icons.pin" :key="d" :d="d" /></svg></span>
            <div class="card-body">
              <h3>{{ s.name }}</h3>
              <p class="address">{{ s.address }}</p>
              <p class="rating"><span class="star">★</span><b>{{ s.rating }}</b><span class="reviews">({{ s.reviews }} reviews)</span></p>
            </div>
            <button type="button" class="details">
              <svg class="icon large" viewBox="0 0 24 24"><path v-for="d in icons.info" :key="d" :d="d" /></svg>
              Details
            </button>
          </li>
        </ul>
      </div>
    </main>

    <div class="scrollbar" aria-hidden="true">
      <svg viewBox="0 0 12 6" width="12" height="6"><path d="M0,6H12L6,0z" /></svg>
      <div class="track"><div class="thumb"></div></div>
      <svg viewBox="0 0 12 6" width="12" height="6"><path d="M0,0H12L6,6z" /></svg>
    </div>
  </div>
</template>

<style>
body {
  margin: 0;
  overflow: hidden;
}
</style>

<style scoped>
.app {
  box-sizing: border-box;
  display: flex;
  height: 100vh;
  overflow: hidden;
  border-bottom: 2px solid #adb2bd;
  font-family: Inter, "Noto Sans", sans-serif;
  font-size: 24px;
  line-height: 36px;
  color: #000;
}
.app *, .app *::before { box-sizing: border-box; }
button, select { font: inherit; color: inherit; border: 0; background: none; padding: 0; cursor: pointer; }
h2, h3, p, ul { margin: 0; padding: 0; list-style: none; }
a { color: inherit; text-decoration: none; }
.icon { width: 24px; height: 24px; flex: none; fill: none; stroke: currentColor; stroke-width: 2; stroke-linecap: round; stroke-linejoin: round; }
.icon.large { width: 30px; height: 30px; }

.sidebar { flex: none; width: 371px; display: flex; flex-direction: column; padding: 22px 24px 22px 11px; border-right: 1px solid #e5e7eb; background: #fff; }
.brand { display: flex; align-items: center; gap: 12px; height: 48px; }
.logo { width: 48px; height: 48px; border-radius: 50%; background: linear-gradient(to bottom right, #60a5fa, #2563eb); }
.brand-name { font-size: 36px; font-weight: 700; color: #1e40af; }
.nav { display: flex; flex-direction: column; gap: 12px; margin-top: 48px; }
.nav-item { display: flex; align-items: center; gap: 24px; height: 54px; padding-left: 24px; border-radius: 9px; font-size: 21px; font-weight: 500; color: #4b5563; white-space: nowrap; }
.nav-item.active { background: #3b82f6; color: #fff; box-shadow: 0 1px 3px rgba(0, 0, 0, .15); }
.account { display: flex; flex-direction: column; gap: 12px; margin-top: auto; padding-top: 24px; border-top: 1px solid #e5e7eb; }
.nav-item.profile { background: #3b82f6; color: #fff; }
.nav-item.logout { background: #ef4444; color: #fff; }

.main { flex: 1; min-width: 0; overflow: hidden; background: linear-gradient(to bottom right, #eff6ff, #fff, #faf5ff) 0 -1324px / 100% 3375px no-repeat; }
.container { max-width: 1920px; margin: 0 auto; }
.filters { display: flex; justify-content: space-between; align-items: flex-start; height: 119px; margin-top: -24px; }
.categories { display: flex; gap: 24px; }
.category { height: 119px; padding: 5px 36px 0; border: 3px solid #f3f4f6; border-radius: 18px; background: #fff; font-weight: 500; color: #111827; }
.radius { position: relative; }
.radius select { appearance: none; width: 201px; height: 58px; padding: 0 40px 0 18px; border: 1px solid #e5e7eb; border-radius: 12px; background: #fff; }
.chevron { position: absolute; right: 8px; top: 25px; fill: none; stroke: #000; stroke-width: 2; pointer-events: none; }

.map { position: relative; height: 600px; margin-top: 48px; border-radius: 24px; overflow: hidden; background: #f5f0e5; box-shadow: 0 30px 38px -8px rgba(0, 0, 0, .1), 0 12px 15px -9px rgba(0, 0, 0, .1); }
.canvas { display: block; width: 100%; height: 100%; }
.canvas path { vector-effect: non-scaling-stroke; }
.urban, .patch { fill: #f7f7f7; }
.beige { fill: #f5f0e5; }
.park { fill: #d3f8e2; }
.wood { fill: #c3f1d5; }
.industry { fill: #d9e3f5; }
.water { fill: #90daee; }
.river { fill: none; stroke: #90daee; stroke-width: 3; }
.minor { fill: none; stroke: #b0bfd0; stroke-opacity: .4; stroke-width: 2; }
.mid { fill: none; stroke: #afbed8; stroke-width: 2; }
.casing { fill: none; stroke: #8b9dc3; stroke-width: 6; stroke-linejoin: round; }
.major { fill: none; stroke: #a8b9d9; stroke-width: 4; stroke-linejoin: round; }
.shield { fill: #fdd835; stroke: #e0ac2b; stroke-width: 2; }
.shield-text { font: 500 15px Roboto, sans-serif; fill: #333; text-anchor: middle; }
.state { fill: #fff; stroke: #666; stroke-width: 2; }
.state-top { fill: #689f38; }
.label { font-family: Roboto, "Noto Sans", "Noto Sans Telugu", sans-serif; text-anchor: middle; fill: #3a3d42; stroke: #fff; stroke-width: 4; stroke-linejoin: round; paint-order: stroke; }
.town { font-size: 18px; }
.start { text-anchor: start; }
.end { text-anchor: end; }
.suburb { font-size: 14px; letter-spacing: 1px; font-weight: 500; fill: #5a5e66; }
.district { font-size: 18px; letter-spacing: 1px; font-weight: 500; }
.city { font-size: 24px; font-weight: 500; fill: #2c2f33; }
.metro { font-size: 38px; font-weight: 500; fill: #2c2f33; }
.district.telugu, .city.telugu, .metro.telugu { font-weight: 700; }
.lake { font-size: 21px; fill: #1a8ba3; stroke: none; }
.poi { font-size: 21px; fill: #8a4ae8; text-anchor: end; }
.poi.small { font-size: 16px; }
.road-name { font-size: 16px; fill: #3c4a68; text-anchor: start; }
.river-name { font-size: 16px; fill: #1a8ba3; stroke: none; text-anchor: start; }
.landmark-rim { fill: #fff; }
.landmark { fill: #ab68ff; }
.landmark-glyph { fill: #fff; }
.me { fill: #4f46e5; stroke: #fff; stroke-width: 2; }
.pin { fill: #ea4335; stroke: #c5221f; stroke-width: 1; }
.pin-dot { fill: #b31412; }

.map-types, .control, .zoom { background: #fff; border-radius: 3px; box-shadow: 0 1px 6px rgba(0, 0, 0, .3); }
.map-types { position: absolute; top: 15px; left: 15px; display: flex; height: 60px; overflow: hidden; font-family: Roboto, sans-serif; font-size: 27px; color: #565656; }
.map-types button { padding: 0 25px; }
.map-types .selected { font-weight: 500; color: #000; box-shadow: 1px 0 2px rgba(0, 0, 0, .15); }
.control { display: grid; place-items: center; width: 60px; height: 60px; }
.fullscreen { position: absolute; top: 15px; right: 15px; }
.side-controls { position: absolute; right: 15px; bottom: 36px; display: flex; flex-direction: column; gap: 48px; }
.zoom { width: 60px; }
.zoom button { display: grid; place-items: center; width: 60px; height: 60px; }
.zoom hr { margin: 0 8px; border: 0; height: 1px; background: #e6e6e6; }
.google { position: absolute; left: 15px; bottom: 6px; font-family: "Open Sans", sans-serif; font-size: 26px; line-height: 32px; font-weight: 600; color: #fff; -webkit-text-stroke: 4px #9a9a94; paint-order: stroke fill; }
.legal { position: absolute; right: 0; bottom: 0; display: flex; height: 21px; font-family: Roboto, sans-serif; font-size: 15px; line-height: 21px; color: #000; }
.legal > * { padding: 0 9px; background: rgba(245, 245, 245, .7); }

.results-head { display: flex; justify-content: space-between; align-items: center; height: 48px; margin: 48px 0 36px; }
.results-head h2 { font-size: 36px; line-height: 48px; font-weight: 600; color: #111827; }
.results-head p { font-size: 21px; color: #4b5563; }
.results { display: flex; flex-direction: column; gap: 24px; }
.card { display: flex; align-items: flex-start; gap: 18px; padding: 24px; border-radius: 12px; background: #fff; box-shadow: 0 1px 3px rgba(0, 0, 0, .06); }
.badge { display: grid; place-items: center; width: 54px; height: 54px; border-radius: 12px; background: #eff6ff; color: #3b82f6; }
.card-body { flex: 1; min-width: 0; }
.card h3 { font-size: 24px; line-height: 36px; font-weight: 600; color: #111827; }
.address { margin-top: 6px; color: #4b5563; }
.rating { display: flex; align-items: center; margin-top: 12px; height: 36px; }
.star { width: 25px; margin-right: 6px; text-align: center; color: #facc15; }
.rating b { font-weight: 500; }
.reviews { margin-left: 6px; font-size: 21px; color: #6b7280; }
.details { display: flex; align-items: center; gap: 12px; padding: 12px 24px; color: #2563eb; }

.scrollbar { flex: none; width: 22px; display: flex; flex-direction: column; align-items: center; padding: 8px 0; background: #f1f1f1; fill: #505050; }
.scrollbar svg { flex: none; margin-left: 2px; }
.track { flex: 1; align-self: stretch; margin: 8px 0; padding-left: 2px; }
.thumb { height: 40%; margin-top: 510px; background: #c1c1c1; }
</style>
